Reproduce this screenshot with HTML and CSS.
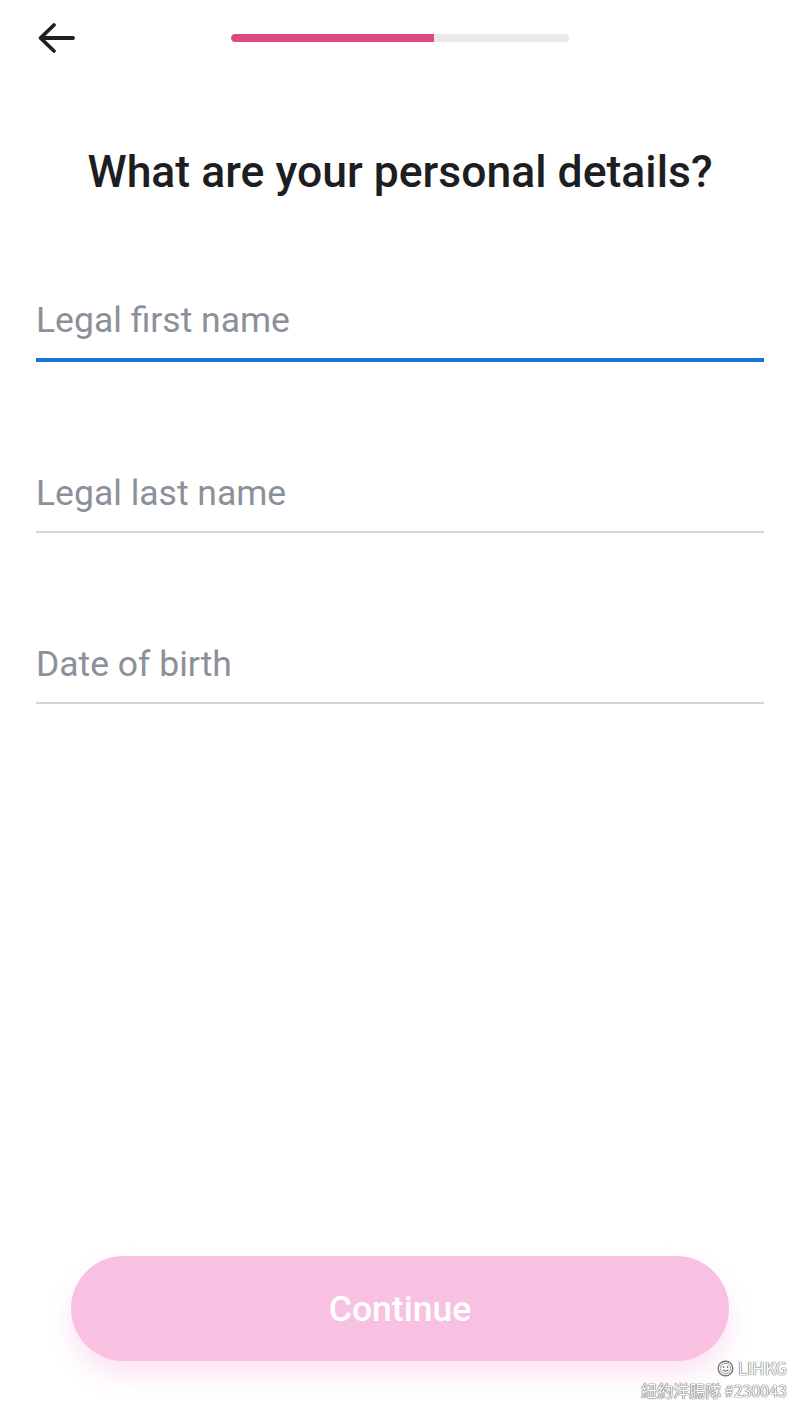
FILE: index.html
```html
<!DOCTYPE html>
<html lang="en">
<head>
    <meta charset="UTF-8">
    <meta name="viewport" content="width=device-width, initial-scale=1.0">
    <title>Personal details</title>
    <link rel="stylesheet" href="styles.css">
</head>
<body>
    <div class="screen">
        <div class="topbar">
            <button class="back" aria-label="Back">
                <svg width="40" height="32" viewBox="0 0 40 32">
                    <path d="M37 16H5M18 3L4.5 16L18 29" fill="none" stroke="#1f2023" stroke-width="3.8" stroke-linecap="round" stroke-linejoin="round"/>
                </svg>
            </button>
            <div class="progress">
                <div class="progress-fill"></div>
            </div>
        </div>

        <h1 class="title">What are your personal details?</h1>

        <div class="fields">
            <div class="field focused">Legal first name</div>
            <div class="field">Legal last name</div>
            <div class="field">Date of birth</div>
        </div>

        <div class="bottom">
            <button class="continue" disabled>Continue</button>
        </div>
    </div>

    <div class="watermark">
        <div class="wm-logo">
            <svg width="17" height="17" viewBox="0 0 17 17">
                <circle cx="8.5" cy="8.5" r="7.3" fill="#fff" stroke="#777" stroke-width="1.4"/>
                <circle cx="8.5" cy="8.5" r="5.2" fill="none" stroke="#999" stroke-width="1"/>
                <path d="M5.6 9.6Q8.5 12.6 11.4 9.6" fill="none" stroke="#777" stroke-width="1.1"/>
                <circle cx="6.4" cy="7" r="0.9" fill="#777"/>
                <circle cx="10.6" cy="7" r="0.9" fill="#777"/>
            </svg>
            <span>LIHKG</span>
        </div>
        <div>紐約洋腸隊 #230043</div>
    </div>
</body>
</html>
```

FILE: styles.css
```css
body {
    margin: 0;
    font-family: Roboto, "Noto Sans", Arial, sans-serif;
    background-color: #fff;
    color: #1f2023;
}
.screen {
    width: 800px;
    height: 1410px;
    display: flex;
    flex-direction: column;
    box-sizing: border-box;
}
.topbar {
    height: 75px;
    display: flex;
    align-items: center;
    padding: 0 0 0 36px;
}
.back {
    background: none;
    border: none;
    padding: 0;
    width: 40px;
    height: 32px;
    cursor: pointer;
}
.back svg {
    display: block;
}
.progress {
    width: 338px;
    height: 8px;
    margin-left: 155px;
    border-radius: 4px;
    background-color: #e8e9ec;
    overflow: hidden;
}
.progress-fill {
    width: 203px;
    height: 100%;
    background-color: #dc4a82;
    border-radius: 4px 0 0 4px;
}
.title {
    margin: 72px 0 0 0;
    text-align: center;
    font-size: 44.5px;
    font-weight: 500;
    line-height: 50px;
    color: #1d1e21;
}
.fields {
    margin-top: 103px;
    padding: 0 36px;
    display: flex;
    flex-direction: column;
    gap: 111px;
}
.field {
    font-size: 35.5px;
    line-height: 40px;
    color: #8b9099;
    padding-bottom: 18px;
    border-bottom: 2px solid #d3d6d9;
    height: 40px;
}
.field.focused {
    border-bottom: 4px solid #1976d2;
}
.bottom {
    margin-top: auto;
    padding: 0 71px 49px 71px;
}
.continue {
    width: 100%;
    height: 105px;
    border: none;
    border-radius: 53px;
    background-color: #f8c1e2;
    color: #fff;
    font-family: Roboto, "Noto Sans", Arial, sans-serif;
    font-size: 35.5px;
    font-weight: 500;
    box-shadow: 0 14px 24px rgba(248, 193, 226, 0.45);
}
.watermark {
    position: absolute;
    top: 1357px;
    right: 13px;
    text-align: right;
    font-family: "Noto Sans CJK TC", "Noto Sans", sans-serif;
    font-size: 16px;
    line-height: 22px;
    color: #fff;
    text-shadow: 0 0 1px #666, 0 0 1px #666, 0 0 1px #666;
}
.wm-logo {
    display: flex;
    justify-content: flex-end;
    align-items: center;
    gap: 4px;
    font-size: 17px;
}
.wm-logo svg {
    display: block;
}
```
